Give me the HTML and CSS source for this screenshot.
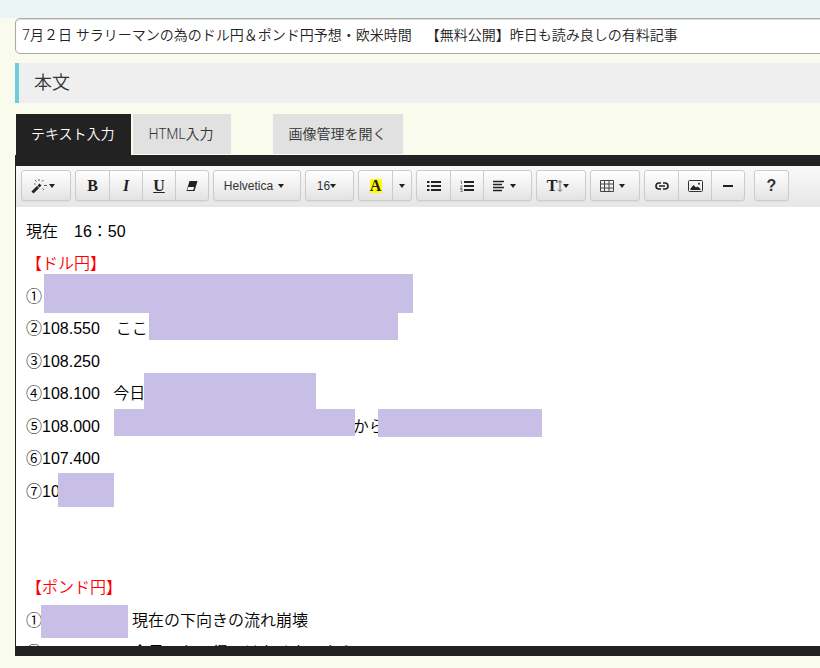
FILE: index.html
```html
<!DOCTYPE html>
<html lang="ja">
<head>
    <meta charset="UTF-8">
    <meta name="viewport" content="width=device-width, initial-scale=1.0">
    <title>記事の編集</title>
    <link rel="stylesheet" href="styles.css">
</head>
<body>
<header class="topbar"></header>
<main class="page">
    <input class="title-input" type="text" aria-label="タイトル" value="7月２日 サラリーマンの為のドル円＆ポンド円予想・欧米時間　【無料公開】昨日も読み良しの有料記事">
    <h2 class="section-title">本文</h2>

    <div class="tabs">
        <button type="button" class="tab active">テキスト入力</button>
        <button type="button" class="tab">HTML入力</button>
        <button type="button" class="tab tab-image">画像管理を開く</button>
    </div>

    <div class="editor">
        <div class="toolbar">
            <div class="group">
                <button type="button" class="wide" aria-label="スタイル">
                    <svg width="18" height="16" viewBox="0 0 18 16"><path d="M1.5 14.5L7 9" stroke="#222" stroke-width="3"/><path d="M7.5 8.5L9.5 6.5" stroke="#222" stroke-width="2.6"/><path d="M4 2l1.500 1.500M8 1v2M12.500 2L11 3.500M13 7.500h3M11.500 10.500l1.500 1.500M3 6h1.500" stroke="#555" stroke-width="1"/></svg>
                    <span class="caret"></span>
                </button>
            </div>
            <div class="group">
                <button type="button" class="serif">B</button>
                <button type="button" class="serif italic">I</button>
                <button type="button" class="serif underline">U</button>
                <button type="button" aria-label="書式をクリア">
                    <svg width="12" height="12" viewBox="0 0 12 12"><path d="M3.500 1h8L8.500 11h-8z" fill="#222"/><path d="M2.200 7h6l-1 3h-6z" fill="#f4f4f4"/></svg>
                </button>
            </div>
            <div class="group">
                <button type="button" class="font-name">Helvetica <span class="caret"></span></button>
            </div>
            <div class="group">
                <button type="button" class="font-size">16<span class="caret"></span></button>
            </div>
            <div class="group">
                <button type="button" class="serif"><span class="highlight">A</span></button>
                <button type="button" class="narrow" aria-label="色を選択"><span class="caret"></span></button>
            </div>
            <div class="group">
                <button type="button" aria-label="箇条書き">
                    <svg width="14" height="12" viewBox="0 0 14 12"><path d="M4 2h10M4 6h10M4 10h10M0 2h2.500M0 6h2.500M0 10h2.500" stroke="#222" stroke-width="2"/></svg>
                </button>
                <button type="button" aria-label="番号付きリスト">
                    <svg width="14" height="12" viewBox="0 0 14 12"><path d="M4 2h10M4 6h10M4 10h10" stroke="#222" stroke-width="2"/><path d="M.5 1h1v3M.3 6h2l-2 2.500h2M.3 9.500h2v2h-2" fill="none" stroke="#666" stroke-width=".8"/></svg>
                </button>
                <button type="button" class="wide" aria-label="段落">
                    <svg width="12" height="12" viewBox="0 0 12 12"><path d="M0 1.500h11M0 4.500h9M0 7.500h11M0 10.500h9" stroke="#222" stroke-width="1.600"/></svg>
                    <span class="caret gap"></span>
                </button>
            </div>
            <div class="group">
                <button type="button" class="wide serif" aria-label="行の高さ">T<svg width="6" height="12" viewBox="0 0 6 12"><path d="M3 1v10M1 2.500L3 .5l2 2M1 9.500l2 2 2-2" fill="none" stroke="#666"/></svg><span class="caret"></span></button>
            </div>
            <div class="group">
                <button type="button" class="wide" aria-label="表">
                    <svg width="14" height="12" viewBox="0 0 14 12"><path d="M.5.5h13v11H.5zM.5 4h13M.5 8h13M4.500.5v11M9 .5v11" fill="none" stroke="#444"/></svg>
                    <span class="caret gap"></span>
                </button>
            </div>
            <div class="group">
                <button type="button" aria-label="リンク">
                    <svg width="14" height="8" viewBox="0 0 14 8"><path d="M6 1H4a3 3 0 0 0 0 6h2M8 1h2a3 3 0 0 1 0 6H8M4 4h6" fill="none" stroke="#222" stroke-width="1.600"/></svg>
                </button>
                <button type="button" aria-label="画像">
                    <svg width="15" height="12" viewBox="0 0 15 12"><rect x=".5" y=".5" width="14" height="11" rx="1" fill="none" stroke="#333"/><path d="M2.500 10V8.500l3-3.500 2.500 2.500 1.500-1L12.500 9v1z" fill="#222"/><circle cx="11" cy="3.800" r="1" fill="#222"/></svg>
                </button>
                <button type="button" aria-label="罫線">
                    <svg width="10" height="2" viewBox="0 0 10 2"><path d="M0 1h10" stroke="#222" stroke-width="2"/></svg>
                </button>
            </div>
            <div class="group help">
                <button type="button">?</button>
            </div>
        </div>

        <div class="content" contenteditable="true" spellcheck="false">
            <p>現在　16：50</p>
            <p class="red">【ドル円】</p>
            <p>①<span class="mask mask-1"></span></p>
            <p>②108.550　ここ<span class="mask mask-2"></span></p>
            <p>③108.250</p>
            <p>④108.100&nbsp;&nbsp; 今日<span class="mask mask-3"></span></p>
            <p>⑤108.000<span class="space-long"></span>から<span class="mask mask-4"></span><span class="mask mask-5"></span></p>
            <p>⑥107.400</p>
            <p>⑦10<span class="mask mask-6"></span></p>
            <p class="blank"><br></p>
            <p class="blank"><br></p>
            <p class="red">【ポンド円】</p>
            <p>①<span class="space"></span>現在の下向きの流れ崩壊<span class="mask mask-7"></span></p>
            <p>②<span class="space"></span>今日のもの得ではなくなったら</p>
        </div>
    </div>
</main>
</body>
</html>
```
FILE: styles.css
```css
* {
    box-sizing: border-box;
}

body {
    margin: 0;
    background-color: #f9fbec;
    color: #333;
    font-family: "Noto Sans CJK JP", sans-serif;
    font-size: 14px;
    overflow-x: hidden;
    text-spacing-trim: space-all;
}

button {
    font-family: inherit;
    cursor: pointer;
}

.topbar {
    height: 18px;
    background-color: #ebf5f4;
}

/* the form runs on past the right edge of the window */
.page {
    margin: 0 -10px 0 15px;
}

.title-input {
    display: block;
    width: 100%;
    height: 36px;
    padding: 0 6px 4px;
    border: 1px solid #aaa;
    border-radius: 5px;
    box-shadow: inset 0 1px 1px #ddd;
    background-color: #fff;
    color: #222;
    font-family: "Noto Sans", "Noto Sans CJK JP", sans-serif;
    font-size: 14px;
    font-weight: 350;
    text-spacing-trim: space-all;
}

.section-title {
    margin: 9px 0 11px;
    padding: 0 0 4px 15px;
    border-left: 4px solid #6dcdd8;
    background-color: #efefef;
    font-size: 18px;
    font-weight: 350;
    line-height: 36px;
}

.tabs {
    display: flex;
    align-items: flex-start;
    gap: 2px;
    padding-left: 1px;
}

.tab {
    height: 40px;
    padding: 0 17px 2px 16px;
    border: none;
    background-color: #e1e1e1;
    color: #333;
    font-family: "Noto Sans", "Noto Sans CJK JP", sans-serif;
    font-size: 14px;
    font-weight: 350;
}

.tab.active {
    height: 41px;
    padding: 0 16px 3px 15px;
    background-color: #222;
    color: #fff;
}

.tab-image {
    margin-left: 40px;
    padding: 0 16px 2px;
}

.editor {
    border: solid #222;
    border-width: 11px 1px 10px;
}

.toolbar {
    display: flex;
    gap: 4px;
    height: 41px;
    padding: 4px 5px;
    background: linear-gradient(#fafafa, #e6e6e6);
}

.group {
    display: flex;
    height: 31px;
    border: 1px solid #ccc;
    border-radius: 3px;
    background: linear-gradient(#fff, #e3e3e3);
    box-shadow: 0 1px 1px #ddd;
}

.group button {
    display: flex;
    align-items: center;
    justify-content: center;
    width: 33px;
    padding: 0;
    border: none;
    background: none;
    color: #333;
    font-family: "Liberation Sans", Arial, sans-serif;
    font-size: 12px;
}

.group button + button {
    border-left: 1px solid #ccc;
}

.group .wide {
    width: 48px;
    padding-right: 6px;
}

.group .narrow {
    width: 19px;
}

.group .font-name {
    gap: 5px;
    width: 86px;
    padding-right: 6px;
}

.group .font-size {
    width: 47px;
    padding-right: 6px;
}

.group .serif {
    color: #222;
    font-family: "Liberation Serif", "Times New Roman", serif;
    font-size: 16px;
    font-weight: bold;
}

.group .italic {
    font-style: italic;
}

.group .underline {
    text-decoration: underline 1px;
}

.highlight {
    width: 12px;
    background-color: #ff0;
    line-height: 14px;
    text-align: center;
}

.help {
    margin-left: 5px;
}

.help button {
    font-size: 16px;
    font-weight: bold;
}

.caret {
    border: 3px solid transparent;
    border-top: 4px solid #222;
    border-bottom: none;
}

.caret.gap {
    margin-left: 5px;
}

.content {
    height: 439px;
    padding: 9px 10px 0;
    overflow: hidden;
    background-color: #fff;
    color: #000;
    font-family: "Liberation Sans", "Noto Sans CJK JP", sans-serif;
    font-size: 16px;
    font-weight: 350;
    line-height: 32px;
}

.content p {
    position: relative;
    height: 32px;
    margin: 0;
    white-space: nowrap;
}

.content p:nth-child(even) {
    margin-bottom: 1px;
}

.content p.blank {
    margin-bottom: 0;
}

.content .red {
    color: #f00;
}

.space {
    display: inline-block;
    width: 90px;
}

.space-long {
    display: inline-block;
    width: 253px;
}

/* blocks that cover the paid text */
.mask {
    position: absolute;
    background-color: #c7bfe6;
}

.mask-1 {
    top: -7px;
    left: 18px;
    width: 369px;
    height: 39px;
}

.mask-2 {
    top: 0;
    left: 123px;
    width: 249px;
    height: 27px;
}

.mask-3 {
    top: -5px;
    left: 118px;
    width: 172px;
    height: 36px;
}

.mask-4 {
    top: -2px;
    left: 88px;
    width: 241px;
    height: 27px;
}

.mask-5 {
    top: -2px;
    left: 352px;
    width: 164px;
    height: 28px;
}

.mask-6 {
    top: -3px;
    left: 32px;
    width: 56px;
    height: 34px;
}

.mask-7 {
    top: 0;
    left: 15px;
    width: 87px;
    height: 33px;
}
```
